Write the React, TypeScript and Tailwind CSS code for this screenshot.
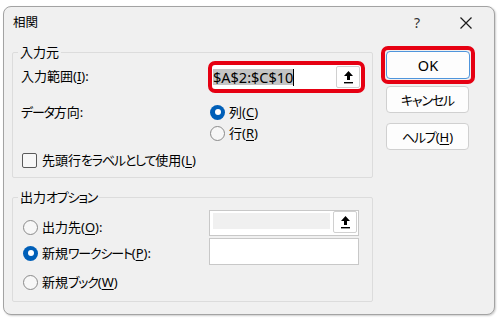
import React from "react";

const font = "font-['Noto_Sans','Noto_Sans_CJK_JP',sans-serif] [font-feature-settings:'palt']";

// Yu Gothic UI kana are narrower than Noto's, so kana runs get tightened
function Jp({ t }: { t: string }) {
  const parts = t.split(/([\u3040-\u30ff]+)/).filter(Boolean);
  return (
    <>
      {parts.map((p, i) =>
        /[\u3040-\u30ff]/.test(p) ? (
          <span key={i} className="tracking-[-1.2px]">
            {p}
          </span>
        ) : (
          <span key={i}>{p}</span>
        )
      )}
    </>
  );
}

function Key({ k }: { k: string }) {
  return <span className="underline underline-offset-[2px] decoration-1">{k}</span>;
}

function Radio({ checked }: { checked?: boolean }) {
  if (checked) {
    return (
      <span className="w-[15px] h-[15px] shrink-0 rounded-full bg-[#005fb8] flex items-center justify-center">
        <span className="w-[6px] h-[6px] rounded-full bg-white" />
      </span>
    );
  }
  return <span className="w-[15px] h-[15px] shrink-0 rounded-full border border-[#8a8a8a] bg-[#f7f7f7]" />;
}

function CollapseIcon() {
  return (
    <svg width="11" height="14" viewBox="0 0 11 14">
      <path d="M5.5 1 L10 6 H7 V10 H4 V6 H1 Z" fill="#000" />
      <rect x="1" y="12" width="9" height="1.4" fill="#000" />
    </svg>
  );
}

function RefButton() {
  return (
    <div className="w-[24px] h-[22px] border border-[#d0d0d0] rounded-[2px] bg-white flex items-center justify-center">
      <CollapseIcon />
    </div>
  );
}

function DialogButton({ children, className = "" }: { children: React.ReactNode; className?: string }) {
  return (
    <div
      className={`w-[83px] h-[27px] border border-[#d0d0d0] rounded-[4px] bg-[#fdfdfd] flex items-center justify-center leading-[16px] ${className}`}
    >
      {children}
    </div>
  );
}

export default function App() {
  return (
    <div className={`w-[502px] h-[321px] bg-white pt-[6px] pl-[3px] text-black ${font}`}>
      <div className="w-[492px] h-[309px] rounded-[8px] border border-[#a3a3a3] bg-[#f0f0f0] shadow-[1px_1px_2px_rgba(0,0,0,0.2)] flex flex-col text-[13px]">
        {/* title bar */}
        <div className="h-[32px] shrink-0 flex items-center pl-[9px] pr-[22px]">
          <span className="text-[12.5px] leading-[16px]">相関</span>
          <span className="ml-auto text-[14px] leading-[16px] text-[#333] mr-[40px]">?</span>
          <svg width="12" height="12" viewBox="0 0 12 12">
            <path d="M0.5 0.5 L11.5 11.5 M11.5 0.5 L0.5 11.5" stroke="#1a1a1a" strokeWidth="1.2" />
          </svg>
        </div>

        <div className="flex pl-[8px]">
          {/* left column */}
          <div className="w-[361px] pt-[5px]">
            <fieldset className="border border-[#dcdcdc] rounded-[2px] pl-[8px] pr-[6px] pb-[8px]">
              <legend className="-ml-[3px] px-[2px] leading-[16px]">入力元</legend>

              <div className="flex items-center h-[32px] mt-[1px]">
                <div className="w-[187px] leading-[16px] pb-[3px]">
                  入力範囲(<Key k="I" />):
                </div>
                <div className="w-[157px] h-[32px] border-[4px] border-[#e60012] rounded-[7px] flex bg-white">
                  <div className="flex-1 flex items-center pl-[1px] text-[14.5px] leading-[16px]">
                    <span className="bg-[#c4c4c4]">$A$2:$C$10</span>
                    <span className="w-[1px] h-[17px] bg-black" />
                  </div>
                  <div className="pt-[1px] pr-[1px]">
                    <RefButton />
                  </div>
                </div>
              </div>

              <div className="flex items-center h-[18px] mt-[10px]">
                <div className="w-[189px] leading-[16px]">
                  <Jp t="データ方向:" />
                </div>
                <Radio checked />
                <span className="ml-[4px] leading-[16px]">
                  列(<Key k="C" />)
                </span>
              </div>

              <div className="flex items-center h-[18px] mt-[3px] pl-[189px]">
                <Radio />
                <span className="ml-[4px] leading-[16px]">
                  行(<Key k="R" />)
                </span>
              </div>

              <div className="flex items-center h-[18px] mt-[9px] pl-[1px]">
                <span className="w-[15px] h-[15px] border border-[#5a5a5a] rounded-[2px] bg-[#f7f7f7]" />
                <span className="ml-[5px] leading-[16px]">
                  <Jp t="先頭行をラベルとして使用" />(<Key k="L" />)
                </span>
              </div>
            </fieldset>

            <fieldset className="mt-[11px] border border-[#dcdcdc] rounded-[2px] pl-[8px] pr-[6px] pb-[10px]">
              <legend className="-ml-[3px] px-[2px] leading-[16px]">
                <Jp t="出力オプション" />
              </legend>

              <div className="flex items-start mt-[5px]">
                <div className="w-[188px] h-[18px] mt-[8px] flex items-center pl-[2px]">
                  <Radio />
                  <span className="ml-[4px] leading-[16px]">
                    出力先(<Key k="O" />):
                  </span>
                </div>
                <div className="w-[150px] h-[26px] border border-[#c8c8c8] bg-white flex justify-between">
                  <div className="w-[117px] h-[16px] mt-[2px] ml-[3px] bg-[#f0f0f0]" />
                  <div className="pr-[1px]">
                    <RefButton />
                  </div>
                </div>
              </div>

              <div className="flex items-center mt-[2px]">
                <div className="w-[188px] h-[18px] mt-[3px] flex items-center pl-[2px]">
                  <Radio checked />
                  <span className="ml-[4px] leading-[16px]">
                    <Jp t="新規ワークシート" />(<Key k="P" />):
                  </span>
                </div>
                <div className="w-[150px] h-[27px] border border-[#c8c8c8] bg-white" />
              </div>

              <div className="flex items-center h-[18px] mt-[8px] pl-[2px]">
                <Radio />
                <span className="ml-[4px] leading-[16px]">
                  <Jp t="新規ブック" />(<Key k="W" />)
                </span>
              </div>
            </fieldset>
          </div>

          {/* right column */}
          <div className="ml-[8px] pt-[7px] flex flex-col">
            <div className="w-[94px] border-[4px] border-[#e60012] rounded-[7px] p-[1px]">
              <div className="w-full h-[28px] border border-[#4f95dc] rounded-[4px] bg-[#fdfdfd] flex items-center justify-center text-[14.5px] leading-[16px]">
                OK
              </div>
            </div>
            <DialogButton className="ml-[5px] mt-[2px]">
              <Jp t="キャンセル" />
            </DialogButton>
            <DialogButton className="ml-[5px] mt-[10px]">
              <Jp t="ヘルプ" />(<Key k="H" />)
            </DialogButton>
          </div>
        </div>
      </div>
    </div>
  );
}
